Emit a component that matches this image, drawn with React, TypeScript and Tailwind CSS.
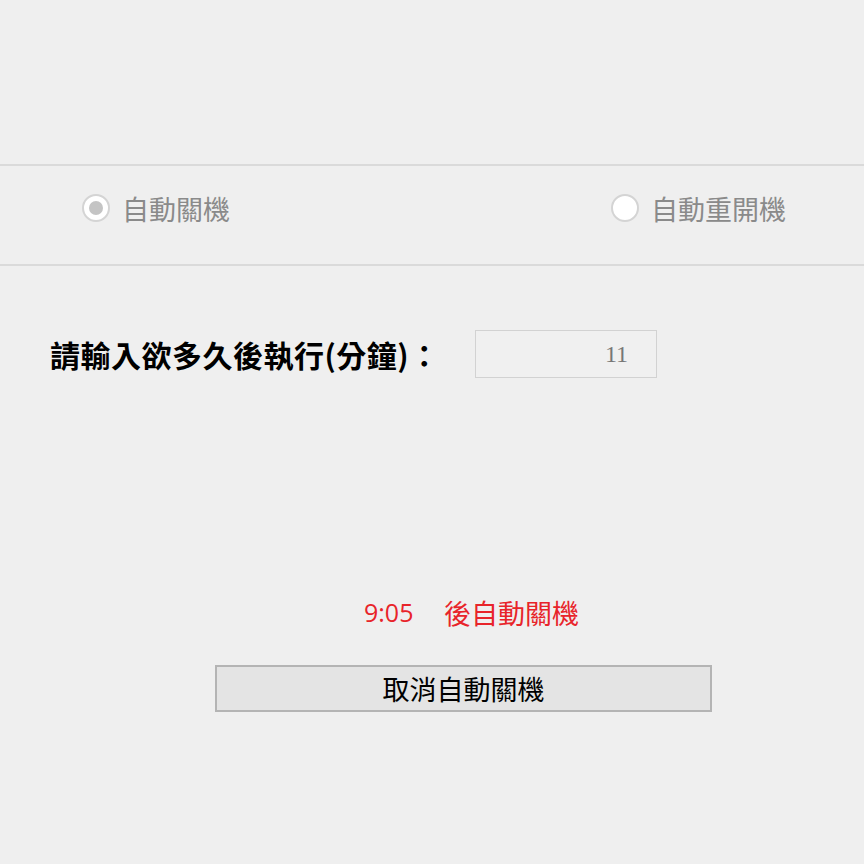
import { useState } from 'react';

const cjk = { fontFamily: '"Noto Sans CJK TC", "Noto Sans", sans-serif' };

function Radio({ checked, label }: { checked: boolean; label: string }) {
  return (
    <div className="flex items-center gap-[12px]">
      <div className="w-[28px] h-[28px] rounded-full border-2 border-[#d4d4d4] bg-white flex items-center justify-center">
        {checked && <div className="w-[14px] h-[14px] rounded-full bg-[#c4c4c4]"></div>}
      </div>
      <span className="text-[27px] leading-none text-[#8a8a8a]" style={cjk}>
        {label}
      </span>
    </div>
  );
}

export default function App() {
  const [minutes] = useState('11');

  return (
    <div className="w-[864px] h-[864px] bg-[#efefef] flex flex-col" style={cjk}>
      {/* mode */}
      <div className="mt-[164px] border-t-2 border-b-2 border-[#dadada] h-[102px] flex items-start pt-[28px]">
        <div className="w-[611px] pl-[82px]">
          <Radio checked label="自動關機" />
        </div>
        <Radio checked={false} label="自動重開機" />
      </div>

      {/* minutes */}
      <div className="mt-[64px] h-[48px] flex items-center pl-[50px]">
        <span className="w-[425px] text-[30px] font-bold text-black leading-none tracking-[0.5px]">請輸入欲多久後執行(分鐘)：</span>
        <div className="w-[182px] h-[48px] border border-[#d2d2d2] bg-[#f0f0f0] flex items-center justify-end pr-[28px]">
          <span className="text-[24px] text-[#777]" style={{ fontFamily: '"Liberation Serif", serif' }}>
            {minutes}
          </span>
        </div>
      </div>

      {/* countdown */}
      <div className="mt-[220px] h-[28px] flex items-center pl-[364px] text-[#e8242a] text-[27px] leading-none">
        <span className="w-[80px] text-[25px]" style={{ fontFamily: '"Open Sans", sans-serif' }}>9:05</span>
        <span>後自動關機</span>
      </div>

      <button className="mt-[39px] ml-[215px] w-[497px] h-[47px] border-2 border-[#b4b4b4] bg-[#e4e4e4] text-[27px] leading-none text-black flex items-center justify-center">
        取消自動關機
      </button>
    </div>
  );
}
